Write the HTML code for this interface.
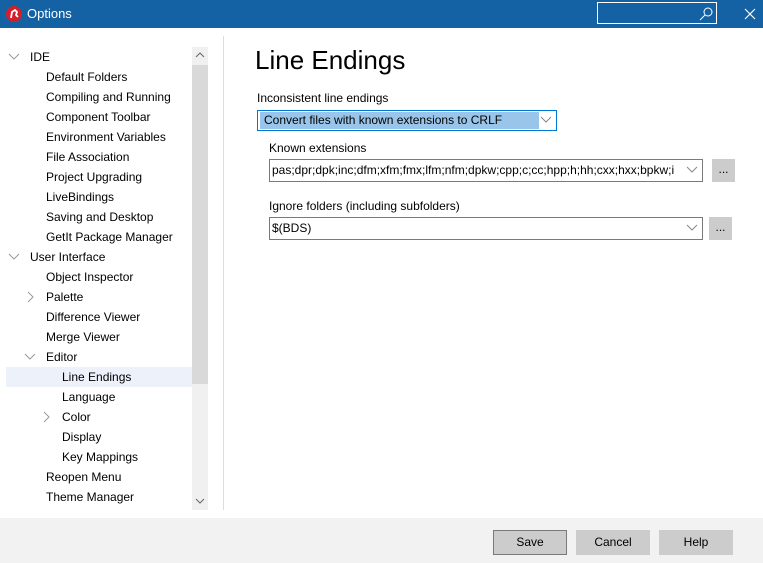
<!DOCTYPE html><html><head><style>
*{margin:0;padding:0;box-sizing:border-box}
body{width:763px;height:563px;overflow:hidden;background:#fff;font-family:"Liberation Sans",sans-serif;font-size:12px;color:#000;position:relative}
.a{position:absolute}
.t{position:absolute;height:20px;line-height:20px;white-space:nowrap}
.btn{position:absolute;top:530px;width:74px;height:25px;background:#ccc;text-align:center;line-height:25px}
.combo{position:absolute;border:1px solid #7a7a7a;background:#fff;height:23px;line-height:21px;padding-left:2px;white-space:nowrap;overflow:hidden}
.dots{position:absolute;background:#ccc;width:23px;height:23px;text-align:center;line-height:20px}
</style></head><body>
<div class="a" style="left:0;top:0;width:763px;height:28px;background:#1462a4"></div>
<svg class="a" style="left:6px;top:6px" width="16" height="16"><circle cx="8" cy="8" r="8" fill="#d21f2b"/><path d="M5 12 L6 6 L9 4 L11 6 L10 9 L12 11" stroke="#fff" stroke-width="1.8" fill="none"/></svg>
<div class="a" style="left:27px;top:6px;color:#fff;font-size:13px">Options</div>
<div class="a" style="left:597px;top:2px;width:120px;height:22px;border:1px solid #fff"></div>
<svg class="a" style="left:698px;top:6px" width="16" height="16"><circle cx="10" cy="6" r="4" stroke="#fff" fill="none"/><path d="M7 9 L2 14" stroke="#fff"/></svg>
<svg class="a" style="left:744px;top:8px" width="12" height="12"><path d="M1 1L11 11M11 1L1 11" stroke="#fff" stroke-width="1.2"/></svg>
<div class="a" style="left:6px;top:367px;width:186px;height:20px;background:#edf1f9"></div>
<div class="a" style="left:192px;top:47px;width:16px;height:463px;background:#f0f0f0"></div>
<div class="a" style="left:192px;top:65px;width:16px;height:319px;background:#d9d9d9"></div>
<svg class="a" style="left:195px;top:52px" width="10" height="6"><path d="M1 5L5 1L9 5" stroke="#666" fill="none"/></svg>
<svg class="a" style="left:195px;top:498px" width="10" height="6"><path d="M1 1L5 5L9 1" stroke="#666" fill="none"/></svg>
<div class="a" style="left:223px;top:36px;width:1px;height:474px;background:#ddd"></div>
<svg class="a" style="left:8px;top:53px" width="12" height="8"><path d="M1 1L6 6L11 1" stroke="#999" fill="none"/></svg>
<svg class="a" style="left:8px;top:253px" width="12" height="8"><path d="M1 1L6 6L11 1" stroke="#999" fill="none"/></svg>
<svg class="a" style="left:24px;top:353px" width="12" height="8"><path d="M1 1L6 6L11 1" stroke="#999" fill="none"/></svg>
<svg class="a" style="left:27px;top:291px" width="8" height="12"><path d="M1 1L6 6L1 11" stroke="#999" fill="none"/></svg>
<svg class="a" style="left:43px;top:411px" width="8" height="12"><path d="M1 1L6 6L1 11" stroke="#999" fill="none"/></svg>
<div class="t" style="left:30px;top:47px">IDE</div>
<div class="t" style="left:46px;top:67px">Default Folders</div>
<div class="t" style="left:46px;top:87px">Compiling and Running</div>
<div class="t" style="left:46px;top:107px">Component Toolbar</div>
<div class="t" style="left:46px;top:127px">Environment Variables</div>
<div class="t" style="left:46px;top:147px">File Association</div>
<div class="t" style="left:46px;top:167px">Project Upgrading</div>
<div class="t" style="left:46px;top:187px">LiveBindings</div>
<div class="t" style="left:46px;top:207px">Saving and Desktop</div>
<div class="t" style="left:46px;top:227px">GetIt Package Manager</div>
<div class="t" style="left:30px;top:247px">User Interface</div>
<div class="t" style="left:46px;top:267px">Object Inspector</div>
<div class="t" style="left:46px;top:287px">Palette</div>
<div class="t" style="left:46px;top:307px">Difference Viewer</div>
<div class="t" style="left:46px;top:327px">Merge Viewer</div>
<div class="t" style="left:46px;top:347px">Editor</div>
<div class="t" style="left:62px;top:367px">Line Endings</div>
<div class="t" style="left:62px;top:387px">Language</div>
<div class="t" style="left:62px;top:407px">Color</div>
<div class="t" style="left:62px;top:427px">Display</div>
<div class="t" style="left:62px;top:447px">Key Mappings</div>
<div class="t" style="left:46px;top:467px">Reopen Menu</div>
<div class="t" style="left:46px;top:487px">Theme Manager</div>
<div class="a" style="left:255px;top:45px;font-size:26px">Line Endings</div>
<div class="a" style="left:257px;top:91px">Inconsistent line endings</div>
<div class="a" style="left:257px;top:110px;width:300px;height:21px;border:1px solid #0078d7;background:#fff"></div>
<div class="a" style="left:260px;top:112px;width:279px;height:17px;background:#99c5ea;line-height:17px;padding-left:4px">Convert files with known extensions to CRLF</div>
<svg class="a" style="left:540px;top:116px" width="12" height="8"><path d="M1 1L6 6L11 1" stroke="#888" fill="none"/></svg>
<div class="a" style="left:269px;top:141px">Known extensions</div>
<div class="combo" style="left:269px;top:159px;width:434px">pas;dpr;dpk;inc;dfm;xfm;fmx;lfm;nfm;dpkw;cpp;c;cc;hpp;h;hh;cxx;hxx;bpkw;i</div>
<div class="a" style="left:676px;top:160px;width:26px;height:21px;background:#fff"></div>
<svg class="a" style="left:686px;top:166px" width="12" height="8"><path d="M1 1L6 6L11 1" stroke="#888" fill="none"/></svg>
<div class="dots" style="left:712px;top:159px">...</div>
<div class="a" style="left:269px;top:199px">Ignore folders (including subfolders)</div>
<div class="combo" style="left:269px;top:217px;width:434px">$(BDS)</div>
<svg class="a" style="left:686px;top:224px" width="12" height="8"><path d="M1 1L6 6L11 1" stroke="#888" fill="none"/></svg>
<div class="dots" style="left:709px;top:217px">...</div>
<div class="a" style="left:0;top:518px;width:763px;height:45px;background:#f2f2f2"></div>
<div class="btn" style="left:493px;border:1px solid #7a7a7a;line-height:23px">Save</div>
<div class="btn" style="left:576px">Cancel</div>
<div class="btn" style="left:659px">Help</div>
</body></html>
